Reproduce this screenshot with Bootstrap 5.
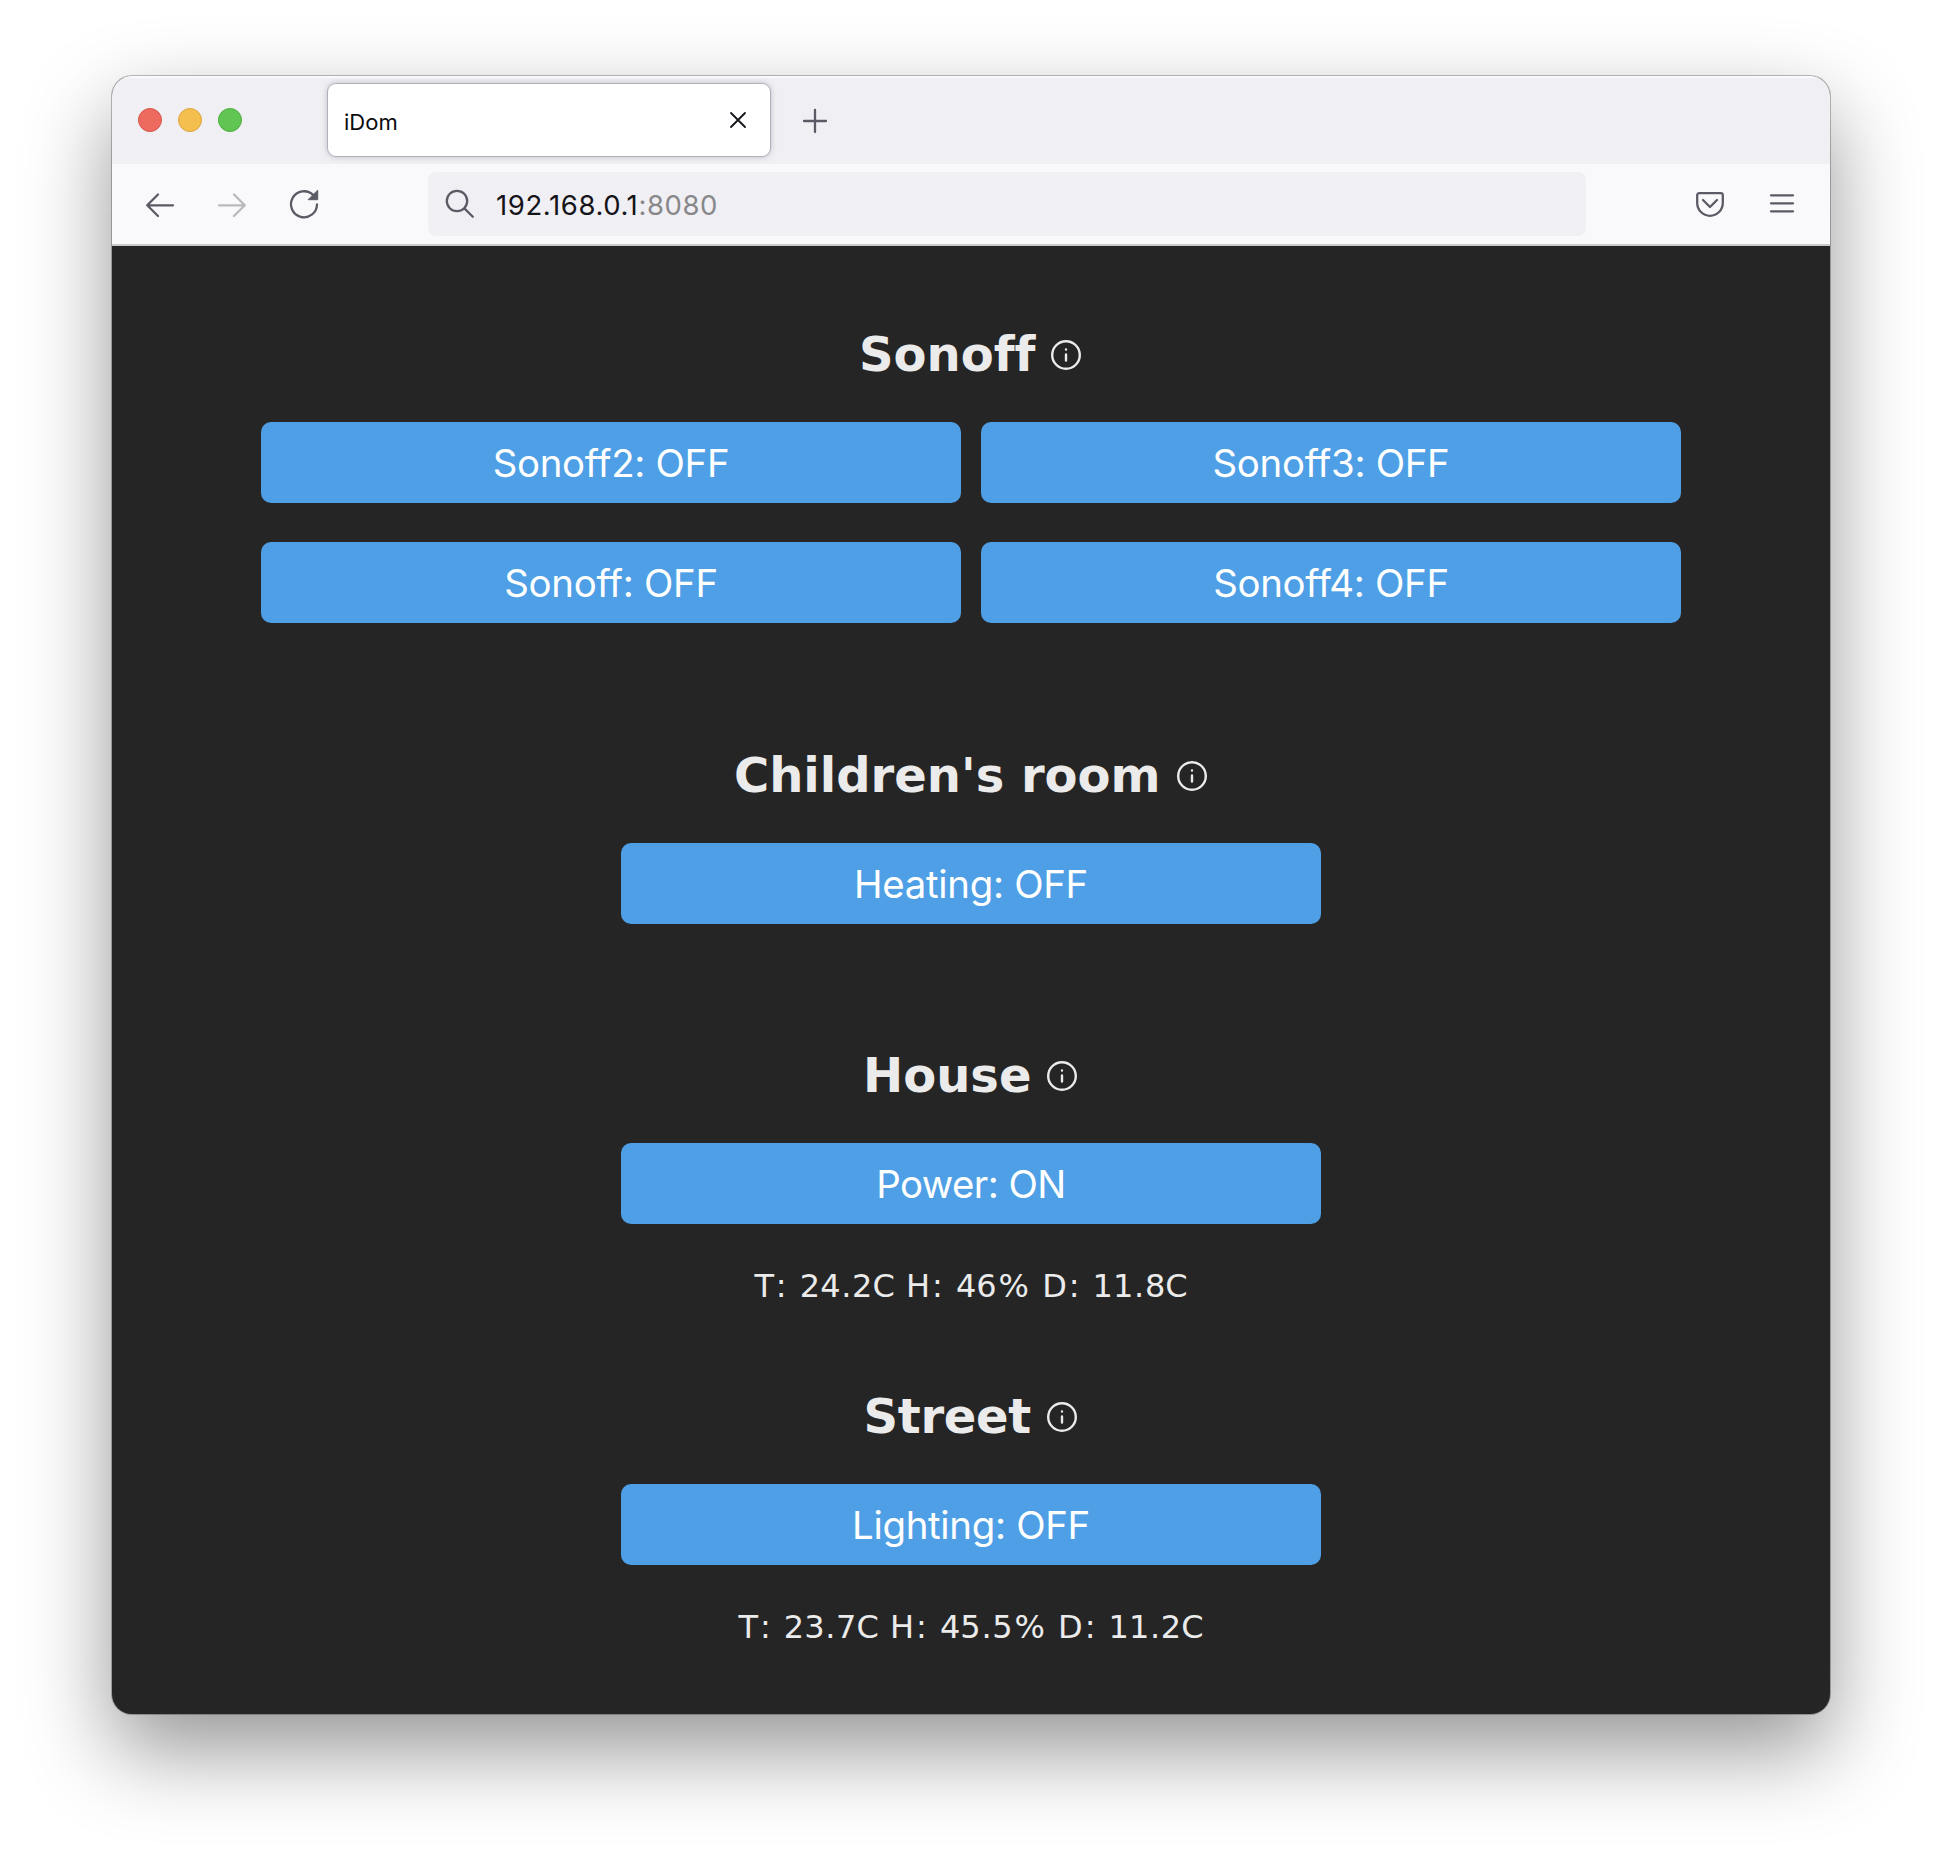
<!DOCTYPE html>
<html lang="en">
<head>
<meta charset="utf-8">
<title>iDom</title>
<link href="https://cdn.jsdelivr.net/npm/bootstrap@5.3.0/dist/css/bootstrap.min.css" rel="stylesheet">
<style>
body{background:#fff;width:1942px;height:1862px;overflow:hidden;padding:76px 112px 148px}
.win{width:1718px;height:1638px;border-radius:20px;background:#252525;overflow:hidden;box-shadow:0 0 0 1px rgba(0,0,0,.25),0 36px 86px rgba(0,0,0,.42)}
.tabstrip{height:88px;background:#f0eff4;padding-left:26px;box-shadow:inset 0 2px 1px #fafafc}
.dot{width:24px;height:24px;border-radius:50%;border:1px solid}
.dot-r{background:#ec6a5e;border-color:#d9544a}
.dot-y{background:#f4bf4f;border-color:#dca53d}
.dot-g{background:#61c554;border-color:#4dae3c}
.tab-box{width:442px;height:72px;margin-left:86px;border-radius:8px;background:#fff;padding:0 16px;box-shadow:0 0 0 1px rgba(128,128,142,.4),0 0 6px rgba(128,128,142,.6);font:22px/32px Inter,sans-serif;color:#0c0c0d}
.tab-box span{padding-top:3px}
.close-x{stroke:#15141a;stroke-width:1.8}
.new-tab{margin-left:29px}
.toolbar{height:82px;background:#f9f9fb;border-bottom:2px solid #cacaca;padding:0 32px;gap:40px}
.address{width:1158px;height:64px;margin-left:68px;margin-right:68px;border-radius:8px;background:#f0eff3;padding-left:16px;gap:20px;font:27.5px/40px Inter,sans-serif;letter-spacing:.6px;color:#15141a}
.address span{padding-top:1px}
.address .port{color:#88888b}
svg{display:block;flex:none;fill:none;stroke:#5b5b66;stroke-width:2.3;stroke-linecap:round;stroke-linejoin:round}
.off{stroke:#b9b9be}
.solid{fill:#5b5b66;stroke-width:1}
.page{height:1468px;padding-top:79px;color:#ebebeb}
.group-box{width:1420px;margin:0 auto}
.g1{height:421px}.g2{height:300px}.g3{height:341px}
.title{font:bold 48px/58px "DejaVu Sans",sans-serif;font-variant-ligatures:none;margin:0 0 39px;padding-right:1.5px;gap:16px}
.title svg{stroke:#ebebeb;stroke-width:2.4;margin-top:2px}
.tight{letter-spacing:-.3px}
.sw{width:700px;height:80.5px;border:0;border-radius:10px;background:#4e9fe5;color:#fff;font:38.4px/48px Inter,sans-serif;font-variant-ligatures:none;letter-spacing:-.3px;padding:2px 0 0}
.sw:hover{background:#4e9fe5;color:#fff}
.sw-power{letter-spacing:-.55px}
.sws{gap:39.5px 20px}
.reading{font:32px/40px "DejaVu Sans",sans-serif;margin:42px 0 0;word-spacing:1.1px}
.reading b{font-weight:400;padding:0 1.9px}
.reading i{font-style:normal;padding:0 .7px}
</style>
<script src="https://cdn.jsdelivr.net/npm/bootstrap@5.3.0/dist/js/bootstrap.bundle.min.js"></script>
</head>
<body>
<div class="win">
  <div class="tabstrip d-flex align-items-center">
    <div class="d-flex gap-3"><span class="dot dot-r"></span><span class="dot dot-y"></span><span class="dot dot-g"></span></div>
    <div class="tab-box d-flex align-items-center justify-content-between"><span>iDom</span>
      <svg class="close-x" width="32" height="32" viewBox="0 0 32 32"><path d="M9 9l14 14M23 9L9 23"/></svg></div>
    <svg class="new-tab" width="32" height="32" viewBox="0 0 32 32"><path d="M5 17h22M16 6v22"/></svg>
  </div>
  <div class="toolbar d-flex align-items-center">
    <svg width="32" height="32" viewBox="0 0 32 32"><path d="M3.500 17.300H29M14 6.500L3.200 17.300 14 28"/></svg>
    <svg class="off" width="32" height="32" viewBox="0 0 32 32"><path d="M28.500 17.300H3M18 6.500l10.800 10.800L18 28"/></svg>
    <svg width="32" height="32" viewBox="0 0 32 32"><path d="M29 16.500A13 13 0 1 1 25 6.900"/><path class="solid" d="M29.700 2.500v9.200H20.500z"/></svg>
    <div class="address d-flex align-items-center">
      <svg width="32" height="32" viewBox="0 0 32 32"><circle cx="13" cy="13" r="10.200"/><path d="M20.600 20.600l8.200 8.200"/></svg>
      <span>192.168.0.1<span class="port">:8080</span></span>
    </div>
    <svg width="32" height="32" viewBox="0 0 32 32"><path d="M5.200 5.200h21.600a2 2 0 0 1 2 2v7.800a12.800 12.800 0 0 1-25.600 0V7.200a2 2 0 0 1 2-2z"/><path d="M9 12l7 7 7-7"/></svg>
    <svg width="32" height="32" viewBox="0 0 32 32"><path d="M5 7.300h22M5 15.300h22M5 23.300h22"/></svg>
  </div>
  <div class="page">
    <section class="group-box g1">
      <h2 class="title d-flex justify-content-center align-items-center"><span>Sonoff</span><svg width="30" height="30" viewBox="0 0 30 30"><circle cx="15" cy="15" r="13.800"/><path d="M15 14.500v6M15 9.400v.2"/></svg></h2>
      <div class="sws d-flex flex-wrap">
        <button class="btn sw">Sonoff2: OFF</button><button class="btn sw">Sonoff3: OFF</button>
        <button class="btn sw">Sonoff: OFF</button><button class="btn sw">Sonoff4: OFF</button>
      </div>
    </section>
    <section class="group-box g2">
      <h2 class="title d-flex justify-content-center align-items-center"><span>Children's room</span><svg width="30" height="30" viewBox="0 0 30 30"><circle cx="15" cy="15" r="13.800"/><path d="M15 14.500v6M15 9.400v.2"/></svg></h2>
      <div class="d-flex justify-content-center"><button class="btn sw">Heating: OFF</button></div>
    </section>
    <section class="group-box g3">
      <h2 class="title d-flex justify-content-center align-items-center"><span>House</span><svg width="30" height="30" viewBox="0 0 30 30"><circle cx="15" cy="15" r="13.800"/><path d="M15 14.500v6M15 9.400v.2"/></svg></h2>
      <div class="d-flex justify-content-center"><button class="btn sw sw-power">Power: ON</button></div>
      <p class="reading text-center">T<b>:</b> 24<i>.</i>2C H<b>:</b> 46<b>%</b> D<b>:</b> 11<i>.</i>8C</p>
    </section>
    <section class="group-box">
      <h2 class="title tight d-flex justify-content-center align-items-center"><span>Street</span><svg width="30" height="30" viewBox="0 0 30 30"><circle cx="15" cy="15" r="13.800"/><path d="M15 14.500v6M15 9.400v.2"/></svg></h2>
      <div class="d-flex justify-content-center"><button class="btn sw">Lighting: OFF</button></div>
      <p class="reading text-center">T<b>:</b> 23<i>.</i>7C H<b>:</b> 45<i>.</i>5<b>%</b> D<b>:</b> 11<i>.</i>2C</p>
    </section>
  </div>
</div>
</body>
</html>
